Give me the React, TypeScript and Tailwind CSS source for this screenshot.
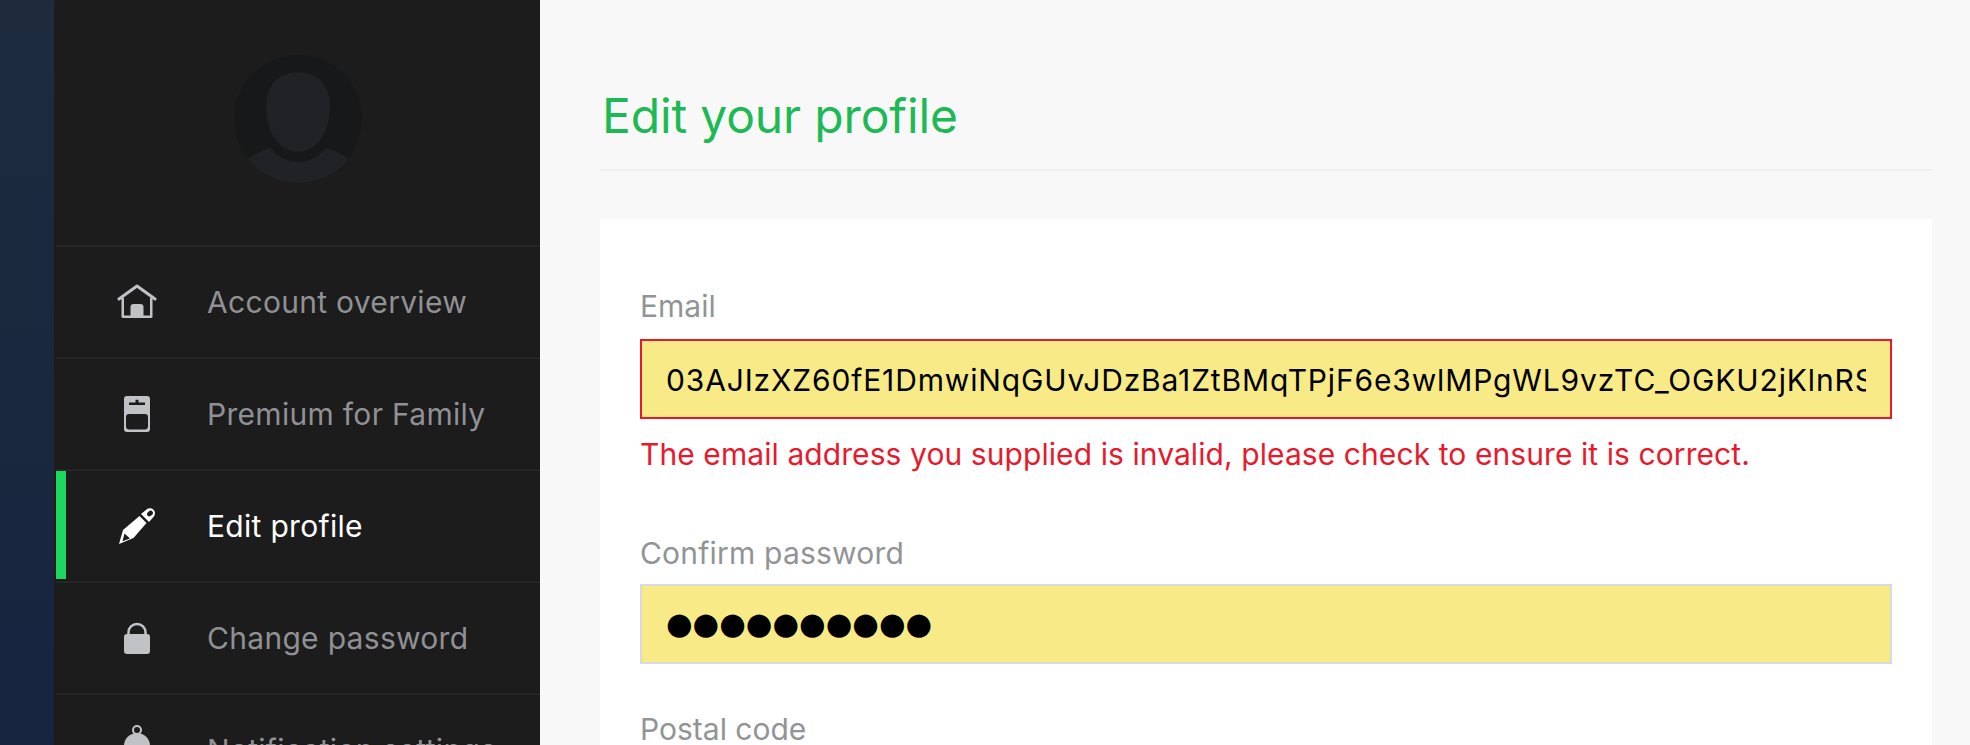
import React from "react";

const font = "[font-family:Inter,'Noto_Sans',sans-serif]";

function HomeIcon() {
  return (
    <svg width="40" height="36" viewBox="0 0 40 36" fill="none">
      <path d="M2 15 20 2l18 13" stroke="#c1c2c6" strokeWidth="3" strokeLinecap="round" strokeLinejoin="round" />
      <path d="M5.750 14v18.750h28.500V14" stroke="#c1c2c6" strokeWidth="2.500" strokeLinejoin="round" />
      <path d="M13.500 33V23a3 3 0 0 1 3-3h7a3 3 0 0 1 3 3v10z" fill="#c1c2c6" />
    </svg>
  );
}

function PremiumIcon() {
  return (
    <svg width="26" height="36" viewBox="0 0 26 36">
      <path
        fillRule="evenodd"
        fill="#c1c2c6"
        d="M3 0h20a3 3 0 0 1 3 3v30a3 3 0 0 1-3 3H3a3 3 0 0 1-3-3V3a3 3 0 0 1 3-3zM5 6.500V9h16V6.500h-6.500V3.800h-3v2.700zM5 18a3 3 0 0 0-3 3v9a3 3 0 0 0 3 3.400h16a3 3 0 0 0 3-3.400v-9a3 3 0 0 0-3-3z"
      />
    </svg>
  );
}

function PencilIcon() {
  return (
    <svg width="36" height="36" viewBox="0 0 36 36">
      <path fill="#fff" d="M22 6 28.500.8c3-1.600 6.500.2 7.300 3.200.5 2-.2 3.800-1.800 5.500l-4 4.500z" />
      <ellipse cx="31" cy="5.500" rx="3.200" ry="2.400" fill="#1c1c1c" transform="rotate(-40 31 5.500)" />
      <path fill="#fff" d="M20.500 8 27.500 15 14.500 30 0 36 4 22z" />
      <path fill="#1c1c1c" d="M5.500 25.500 11 30.500 3.500 33.300z" />
    </svg>
  );
}

function LockIcon() {
  return (
    <svg width="26" height="32" viewBox="0 0 26 32" fill="none">
      <path d="M4.500 14V10.500a8.500 8.500 0 0 1 17 0V14" stroke="#c1c2c6" strokeWidth="2.500" />
      <rect x="0" y="12" width="26" height="20" rx="3" fill="#c1c2c6" />
    </svg>
  );
}

function BellIcon() {
  return (
    <svg width="26" height="50" viewBox="0 0 26 50" fill="none">
      <circle cx="13" cy="5" r="4" stroke="#c1c2c6" strokeWidth="2" />
      <path d="M0 21a13 13 0 0 1 26 0v19H0z" fill="#c1c2c6" />
    </svg>
  );
}

function Avatar() {
  return (
    <svg width="128" height="128" viewBox="0 0 128 128">
      <circle cx="64" cy="64" r="64" fill="#17181a" />
      <path fill="#212226" d="M64 17c19 0 32 14 32 34 0 27-14 46-32 46S32 78 32 51c0-20 13-34 32-34z" />
      <path fill="#212226" d="M14 104c6-5 15-9 22-11 7 8 17 14 28 14s21-6 28-14c8 2 16 6 23 11-12 15-30 24-51 24s-38-9-50-24z" />
    </svg>
  );
}

const items = [
  { label: "Account overview", icon: <HomeIcon /> },
  { label: "Premium for Family", icon: <PremiumIcon /> },
  { label: "Edit profile", icon: <PencilIcon />, active: true },
  { label: "Change password", icon: <LockIcon /> },
  { label: "Notification settings", icon: <BellIcon /> },
];

export default function App() {
  return (
    <div className={`flex h-[745px] w-[1970px] overflow-hidden ${font}`}>
      <div className="h-full w-[54px] shrink-0 bg-gradient-to-b from-[#1d2b3d] to-[#172440]" />
      <nav className="h-full w-[486px] shrink-0 overflow-hidden bg-[#1c1c1c] pl-[2px]">
        <div className="flex h-[245px] items-start justify-center pt-[55px]">
          <Avatar />
        </div>
        {items.map((it) => (
          <div
            key={it.label}
            className="relative flex h-[112px] items-center border-t-2 border-b border-t-[#262626] border-b-[#181818]"
          >
            {it.active && <div className="absolute top-0 bottom-[1px] left-0 w-[10px] bg-[#1ed760]" />}
            <div className="flex w-[151px] shrink-0 items-center justify-center pl-[10px]">{it.icon}</div>
            <span
              className={`pt-[2px] text-[30px] tracking-[0.3px] ${it.active ? "text-white" : "text-[#8f9194]"}`}
            >
              {it.label}
            </span>
          </div>
        ))}
      </nav>
      <main className="flex h-full w-[1430px] min-w-0 flex-col bg-[#f8f8f8] pr-[38px] pl-[60px]">
        <div className="flex h-[171px] shrink-0 items-start border-b-2 border-[#f0f0f0] pt-[84px]">
          <h1 className="pl-[2px] text-[48px] tracking-[-0.15px] leading-[64px] font-normal text-[#1db954]">Edit your profile</h1>
        </div>
        <form className="mt-[48px] min-w-0 flex-1 bg-white px-[40px] pt-[67px]">
          <label className="block text-[30px] leading-[40px] text-[#919496]">Email</label>
          <div className="mt-[13px] flex h-[80px] items-center border-2 border-[#e8192c] bg-[#f8eb87] px-[24px] pt-[2px] text-[30px] tracking-[0.85px] text-black">
            <span className="min-w-0 overflow-hidden whitespace-nowrap">
              03AJIzXZ60fE1DmwiNqGUvJDzBa1ZtBMqTPjF6e3wlMPgWL9vzTC_OGKU2jKlnRS
            </span>
          </div>
          <p className="mt-[15px] text-[30px] tracking-[0.08px] leading-[40px] whitespace-nowrap text-[#e8192c]">
            The email address you supplied is invalid, please check to ensure it is correct.
          </p>
          <label className="mt-[59px] block text-[30px] tracking-[0.2px] leading-[40px] text-[#919496]">Confirm password</label>
          <div className="mt-[11px] flex h-[80px] items-center border-2 border-[#d9dadc] bg-[#f8eb87] px-[24px] text-[30.5px] text-black [font-family:'DejaVu_Sans',sans-serif]">
            ●●●●●●●●●●
          </div>
          <label className="mt-[45px] block text-[30px] leading-[40px] text-[#919496]">Postal code</label>
        </form>
      </main>
    </div>
  );
}
